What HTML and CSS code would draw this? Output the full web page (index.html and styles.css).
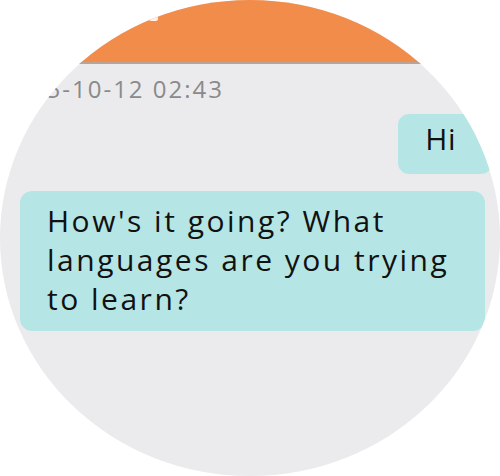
FILE: index.html
```html
<!DOCTYPE html>
<html>
<head>
<meta charset="utf-8">
<link rel="stylesheet" href="styles.css">
</head>
<body>
<div class="screen">
  <header class="topbar">
    <span class="topbar-mark"></span>
  </header>
  <div class="chat">
    <div class="stamp"><span>2015-10-12 02:43</span></div>
    <div class="row row-out">
      <div class="bubble bubble-out">Hi</div>
    </div>
    <div class="row row-in">
      <div class="bubble bubble-in">How's it going? What languages are you trying to learn?</div>
    </div>
  </div>
</div>
</body>
</html>
```

FILE: styles.css
```css
html, body {
  margin: 0;
  padding: 0;
  background: #ffffff;
}
.screen {
  width: 500px;
  height: 476px;
  border-radius: 50%;
  overflow: hidden;
  background: #ebebed;
  display: flex;
  flex-direction: column;
  font-family: "Open Sans", "Noto Sans", sans-serif;
}
.topbar {
  position: relative;
  height: 62px;
  flex: none;
  background: #f28c4a;
  border-bottom: 2px solid #b9a597;
}
.topbar-mark {
  position: absolute;
  left: 149px;
  top: 16px;
  width: 9px;
  height: 5px;
  border-radius: 3px;
  background: #fff3ea;
}
.chat {
  display: flex;
  flex-direction: column;
}
.stamp {
  width: 224px;
  display: flex;
  justify-content: flex-end;
  white-space: nowrap;
  color: #8a8a8a;
  font-size: 24px;
  letter-spacing: 2px;
  line-height: 30px;
  margin-top: 10px;
}
.row {
  display: flex;
}
.row-out {
  justify-content: flex-end;
  margin-top: 10px;
  padding-right: 8px;
}
.row-in {
  margin-top: 17px;
  padding-left: 20px;
  padding-right: 15px;
}
.bubble {
  background: #b5e6e5;
  color: #111111;
  font-size: 30px;
  line-height: 39px;
  letter-spacing: 2.5px;
}
.bubble-out {
  letter-spacing: 0.5px;
  padding: 5px 36px 16px 27px;
  border-radius: 11px;
}
.bubble-in {
  flex: 1;
  padding: 10px 25px 13px 27px;
  border-radius: 12px;
}
```
